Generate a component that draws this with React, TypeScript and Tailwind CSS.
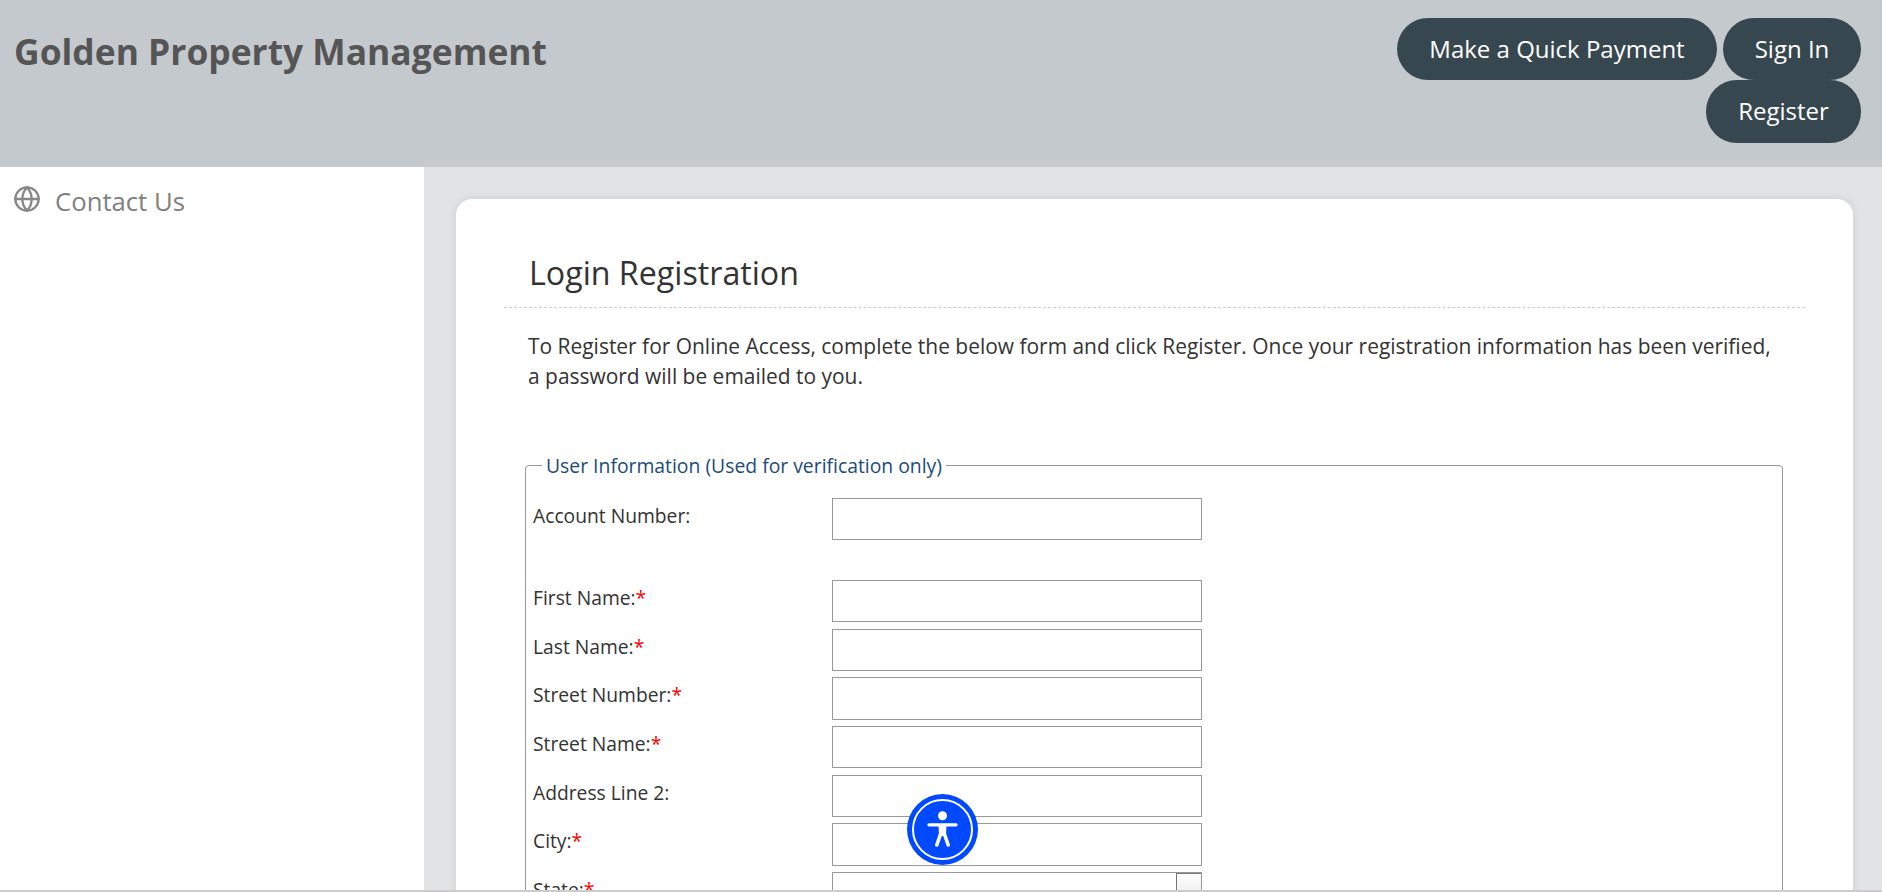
import { Globe } from 'lucide-react';

const rows = [
  { label: 'First Name:', required: true },
  { label: 'Last Name:', required: true },
  { label: 'Street Number:', required: true },
  { label: 'Street Name:', required: true },
  { label: 'Address Line 2:', required: false },
  { label: 'City:', required: true },
];

function Pill({ children, className = '' }: { children: string; className?: string }) {
  return (
    <a className={`flex items-center justify-center rounded-[31px] bg-[#37474f] text-[24px] text-white ${className}`}>
      {children}
    </a>
  );
}

function FieldLabel({ label, required }: { label: string; required: boolean }) {
  return (
    <label className="pt-[6px] text-[19.25px] leading-[24px] text-[#333]">
      {label}
      {required && <span className="text-[#f00]">*</span>}
    </label>
  );
}

export default function App() {
  return (
    <div className="relative flex h-[892px] flex-col overflow-hidden border-b-2 border-[#ccc] font-['Open_Sans',sans-serif]">
      {/* Header */}
      <header className="flex h-[167px] shrink-0 justify-between bg-[#c4c9cd]">
        <h1 className="pl-[14px] pt-[29px] text-[35.4px] font-bold leading-[45px] text-[#555]">
          Golden Property Management
        </h1>
        <div className="flex flex-col items-end pr-[21px] pt-[18px]">
          <div className="flex gap-[6px]">
            <Pill className="h-[62px] w-[320px]">Make a Quick Payment</Pill>
            <Pill className="h-[62px] w-[138px]">Sign In</Pill>
          </div>
          <Pill className="h-[63px] w-[155px] pb-[2px]">Register</Pill>
        </div>
      </header>

      <div className="flex min-h-0 flex-1">
        {/* Sidebar */}
        <nav className="w-[424px] shrink-0 bg-white">
          <a className="flex items-start pl-[13px] pt-[18px] text-[#888]">
            <Globe size={28} strokeWidth={2} />
            <span className="ml-[14px] text-[25.7px] leading-[34px] text-[#808080]">Contact Us</span>
          </a>
        </nav>

        {/* Main */}
        <main className="min-w-0 flex-1 bg-[#e1e3e5] pl-[32px] pr-[29px] pt-[32px]">
          <div className="h-[800px] rounded-t-[16px] bg-white px-[48px] pt-[53px] shadow-[0_0_8px_rgba(0,0,0,0.1)]">
            <h2 className="border-b border-dashed border-[#ccc] pb-[13px] pl-[25px] text-[32.2px] font-normal leading-[42px] text-[#333]">
              Login Registration
            </h2>
            <p className="mt-[23px] pl-[24px] pr-[28px] text-[20.95px] leading-[30px] text-[#333]">
              To Register for Online Access, complete the below form and click Register. Once your registration
              information has been verified, a password will be emailed to you.
            </p>

            <fieldset className="ml-[21px] mr-[22px] mt-[61px] rounded-[4px] border border-[#999] pl-[7px] pt-[20px]">
              <legend className="ml-[9px] px-[4px] pt-[2px] text-[19.35px] leading-[24px] text-[#1b4b7a]">
                User Information (Used for verification only)
              </legend>
              <div className="grid grid-cols-[299px_370px] gap-y-[6.3px]">
                <FieldLabel label="Account Number:" required={false} />
                <input className="h-[42.4px] border border-[#999] bg-white" />
                <div className="col-span-2 h-[27px]" />
                {rows.map((r) => (
                  <div key={r.label} className="contents">
                    <FieldLabel label={r.label} required={r.required} />
                    <input className="h-[42.4px] border border-[#999] bg-white" />
                  </div>
                ))}
                <FieldLabel label="State:" required />
                <div className="flex h-[42.4px] justify-end border border-[#999] bg-white">
                  <button className="h-full w-[25px] border-l border-t border-[#777] bg-gradient-to-b from-white to-[#ddd]" />
                </div>
              </div>
            </fieldset>
          </div>
        </main>
      </div>

      {/* Accessibility widget */}
      <button className="absolute left-[907px] top-[794px] flex h-[71px] w-[71px] items-center justify-center rounded-full bg-[#0049ff]">
        <svg width="71" height="71" viewBox="0 0 71 71" fill="none">
          <circle cx="35.5" cy="35.5" r="29.5" stroke="white" strokeWidth="2" />
          <circle cx="35.5" cy="21.8" r="4.5" fill="white" />
          <path d="M22 30.8H49" stroke="white" strokeWidth="3.3" strokeLinecap="round" />
          <path d="M31.5 31H39.5L39 42H32Z" fill="white" />
          <path d="M33.6 40L29.8 51M37.4 40L41.2 51" stroke="white" strokeWidth="3.6" strokeLinecap="round" />
        </svg>
      </button>
    </div>
  );
}
